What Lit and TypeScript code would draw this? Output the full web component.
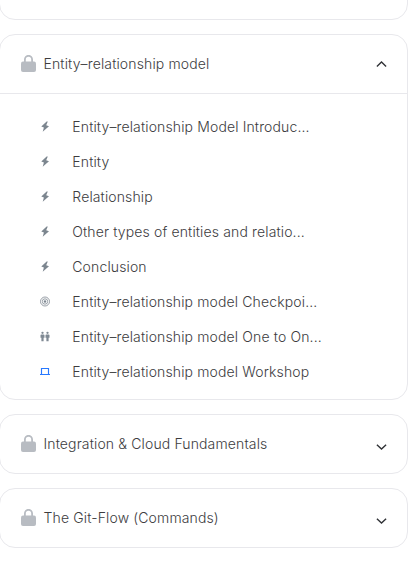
import { LitElement, html, css, svg, nothing } from "lit";
import { customElement, property } from "lit/decorators.js";

type Kind = "lesson" | "checkpoint" | "pairing" | "workshop";
interface Lesson {
  kind: Kind;
  title: string;
}
interface Module {
  title: string;
  lessons?: Lesson[];
}

const modules: Module[] = [
  {
    title: "Entity–relationship model",
    lessons: [
      { kind: "lesson", title: "Entity–relationship Model Introduc..." },
      { kind: "lesson", title: "Entity" },
      { kind: "lesson", title: "Relationship" },
      { kind: "lesson", title: "Other types of entities and relatio..." },
      { kind: "lesson", title: "Conclusion" },
      { kind: "checkpoint", title: "Entity–relationship model Checkpoi..." },
      { kind: "pairing", title: "Entity–relationship model One to On..." },
      { kind: "workshop", title: "Entity–relationship model Workshop" },
    ],
  },
  { title: "Integration & Cloud Fundamentals" },
  { title: "The Git-Flow (Commands)" },
];

const glyphs = {
  lesson: svg`<path fill="#7c868f" d="M6.6.5 1.3 5.6l2.6 1L2.7 10.8 9 5.3 6.2 4.3 7.8.5z"/>`,
  checkpoint: svg`<g fill="none" stroke="#7d8791" stroke-width=".8"><circle cx="5" cy="5.5" r="4.5"/><circle cx="5" cy="5.5" r="2.7"/></g><circle cx="5" cy="5.5" r="1.2" fill="#7d8791"/>`,
  pairing: svg`<g fill="#7f8993"><circle cx="2.5" cy="1.8" r="1.15"/><circle cx="7.5" cy="1.8" r="1.15"/><path d="M1.4 3.4h2.2q.9 0 .9.9v2.5h-.9v3.5H1.4V6.8H.5V4.3q0-.9.9-.9zM6.4 3.4h2.2q.9 0 .9.9v2.5h-.9v3.5H6.4V6.8h-.9V4.3q0-.9.9-.9z"/></g>`,
  workshop: svg`<path fill="none" stroke="#2879ff" stroke-width="1.15" d="M1.5 8V2.5h7V8M0 8.5h10"/>`,
};

@customElement("module-card")
export class ModuleCard extends LitElement {
  @property({ attribute: false }) module!: Module;

  static styles = css`
    :host {
      display: block;
      box-sizing: border-box;
      border: 1px solid #e8e8ec;
      border-radius: 16px;
      background: #fff;
    }
    .header {
      display: flex;
      align-items: center;
      height: 58px;
      padding: 0 20px 0 21px;
    }
    .lock {
      width: 15px;
      height: 17px;
      margin: 0 7.5px 1px 0;
      flex: none;
    }
    .title {
      flex: 1;
      white-space: nowrap;
    }
    .chevron {
      width: 11px;
      height: 6px;
      flex: none;
    }
    .chevron.closed {
      margin: 6px 0.5px 0 0;
    }
    .lessons {
      margin: 0;
      padding: 15px 0 10px 40px;
      list-style: none;
      border-top: 1px solid #e8e8ec;
    }
    .lesson {
      display: flex;
      align-items: center;
      height: 35px;
      white-space: nowrap;
    }
    .glyph {
      width: 10px;
      height: 11px;
      margin-right: 22.3px;
      flex: none;
    }
  `;

  render() {
    const { title, lessons } = this.module;
    return html`
      <div class="header">
        <svg class="lock" viewBox="0 0 15 17">
          <path fill="none" stroke="#b8bcc2" stroke-width="1.8" d="M3.9 7.5V4.4a3.6 3.6 0 0 1 7.2 0v3.1" />
          <rect y="6.4" width="15" height="10.6" rx="2" fill="#b8bcc2" />
        </svg>
        <span class="title">${title}</span>
        <svg class="chevron ${lessons ? "open" : "closed"}" viewBox="0 0 11 6">
          <path fill="none" stroke="#303236" stroke-width="1.4" d=${lessons ? "M.9 5.4 5.5 1l4.6 4.4" : "M.9.7 5.5 5 10.1.7"} />
        </svg>
      </div>
      ${lessons
        ? html`<ul class="lessons">
            ${lessons.map(
              (l) => html`<li class="lesson">
                <svg class="glyph" viewBox="0 0 10 11">${glyphs[l.kind]}</svg>
                <span>${l.title}</span>
              </li>`
            )}
          </ul>`
        : nothing}
    `;
  }
}

@customElement("app-root")
export class AppRoot extends LitElement {
  static styles = css`
    :host {
      display: block;
      height: 566px;
      overflow: hidden;
      background: #fff;
      color: #3c3c3e;
      font: 300 14px/20px Inter, "Liberation Sans", sans-serif;
      letter-spacing: 0.135px;
    }
    .list {
      display: flex;
      flex-direction: column;
      gap: 14px;
      width: 409px;
      margin: -40px 0 0 -1px;
    }
    .previous {
      box-sizing: border-box;
      height: 60px;
      border: 1px solid #e8e8ec;
      border-radius: 16px;
    }
  `;

  render() {
    return html`<div class="list">
      <div class="previous"></div>
      ${modules.map((m) => html`<module-card .module=${m}></module-card>`)}
    </div>`;
  }
}
